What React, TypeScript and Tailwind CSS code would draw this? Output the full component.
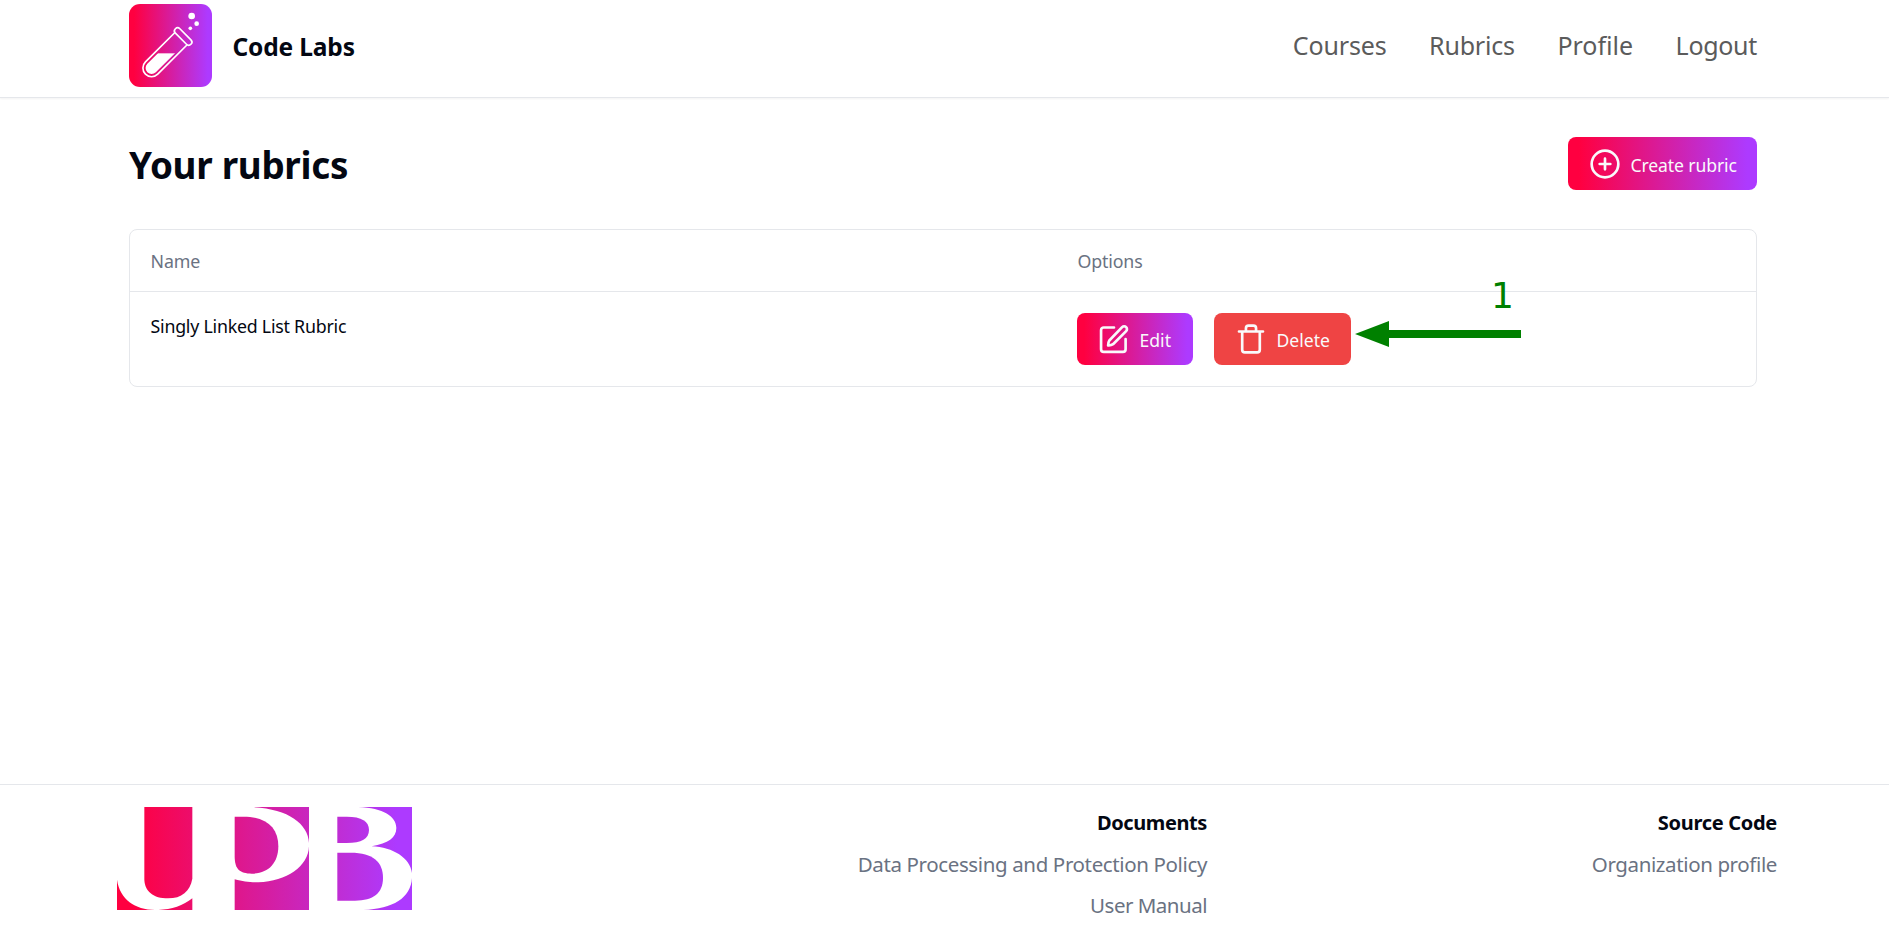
import type { ReactNode } from "react";

const BRAND = "bg-[linear-gradient(90deg,#ff0040_6%,#ad3aff_95%)]";

function FlaskLogo() {
  return (
    <div className={`size-[83px] overflow-hidden rounded-[11px] ${BRAND}`}>
      <svg viewBox="57 12 249 249" className="size-full" fill="none">
        <defs>
          <clipPath id="tube">
            <path
              transform="translate(219.5 109.5) rotate(45)"
              d="M-18 8V134A18 18 0 0 0 18 134V8Z"
            />
          </clipPath>
        </defs>
        <g transform="translate(219.5 109.5) rotate(45)" stroke="#fff" strokeWidth="5">
          <path d="M-26 9V134A26 26 0 0 0 26 134V9" />
          <rect x="-33" y="-9.5" width="66" height="19" rx="9.5" />
        </g>
        <rect x="57" y="160" width="249" height="101" fill="#fff" clipPath="url(#tube)" />
        <circle cx="245" cy="48" r="10" fill="#fff" />
        <circle cx="260" cy="71" r="7" fill="#fff" />
        <circle cx="241" cy="85" r="5.5" fill="#fff" />
      </svg>
    </div>
  );
}

function UniversityLogo() {
  return (
    <svg viewBox="51 97 885 309" className="h-[103px] w-[295px]">
      <defs>
        <linearGradient id="upb" gradientUnits="userSpaceOnUse" x1="51" y1="0" x2="936" y2="0">
          <stop offset="0.05" stopColor="#ff0040" />
          <stop offset="0.95" stopColor="#ad3aff" />
        </linearGradient>
      </defs>
      <g fill="url(#upb)">
        <path d="M133 97H277V312C270 350 245 371 204 371C160 371 133 350 133 312Z" />
        <path d="M51 315C60 375 105 404 165 406H51Z" />
        <path d="M277 371V406H175C215 405 250 393 277 371Z" />
        <path d="M450 97H627V205C625 145 560 100 450 97Z" />
        <path d="M404 126H430C500 126 535 160 535 215C535 265 505 297 455 297C420 297 404 285 404 245Z" />
        <path d="M404 314C430 321 445 323 475 323C560 320 625 275 627 215V406H404Z" />
        <path d="M712 126H740C785 126 807 140 807 166C807 192 785 205 740 205H712Z" />
        <path d="M712 234H752C820 234 849 262 849 310C849 355 820 378 765 378H712Z" />
        <path d="M775 97H936V295C930 250 880 218 815 215C865 205 889 190 889 160C889 125 850 100 775 97Z" />
        <path d="M936 310V406H790C880 402 932 370 936 310Z" />
      </g>
    </svg>
  );
}

function Icon({ children }: { children: ReactNode }) {
  return (
    <svg
      viewBox="0 0 24 24"
      className="size-8 shrink-0"
      fill="none"
      stroke="#f9fafb"
      strokeWidth="2"
      strokeLinecap="round"
      strokeLinejoin="round"
    >
      {children}
    </svg>
  );
}

const BUTTON =
  "flex items-center gap-[10px] rounded-[8px] pl-[20.5px] text-[17.6px] leading-[26px] text-gray-50";

export default function App() {
  return (
    <div className="relative flex h-[938px] w-[1889px] flex-col overflow-hidden bg-white font-['Noto_Sans',sans-serif] text-gray-950">
      <header className="h-[98px] border-b border-gray-200 pt-1 pr-[132px] pl-[129px] shadow-xs">
        <div className="flex h-[83px] items-center">
          <FlaskLogo />
          <span className="ml-[20.5px] pt-[3px] text-[24.5px] font-bold tracking-[-0.15px]">
            Code Labs
          </span>
          <nav className="ml-auto flex gap-[42.5px] pt-px text-[25px] text-[#5b5b5b]">
            <a className="tracking-[-0.15px]">Courses</a>
            <a className="tracking-[-0.18px]">Rubrics</a>
            <a>Profile</a>
            <a className="tracking-[-0.3px]">Logout</a>
          </nav>
        </div>
      </header>

      <main className="flex-1 pt-[39px] pr-[132px] pl-[129px]">
        <div className="flex h-[53px] items-center justify-between">
          <h1 className="pt-[3px] text-[36.8px] leading-[50px] font-bold tracking-[-0.3px]">
            Your rubrics
          </h1>
          <button className={`h-[53px] w-[189px] ${BUTTON} ${BRAND}`}>
            <Icon>
              <circle cx="12" cy="12" r="10" />
              <path d="M8 12h8M12 8v8" />
            </Icon>
            <span className="pt-[2px] tracking-[-0.12px] whitespace-nowrap">Create rubric</span>
          </button>
        </div>

        <section className="mt-[39px] rounded-[8px] border border-gray-200 text-[17.8px]">
          <div className="grid h-[62px] grid-cols-[927px_1fr] items-center border-b border-gray-200 pt-[2px] text-gray-500">
            <span className="pl-[20.5px] tracking-[-0.1px]">Name</span>
            <span className="pl-[20.5px] tracking-[-0.15px]">Options</span>
          </div>
          <div className="grid h-[94px] grid-cols-[927px_1fr] pt-[21px]">
            <span className="pl-[20.5px] leading-[27px] tracking-[-0.23px]">
              Singly Linked List Rubric
            </span>
            <div className="flex gap-[21px] pl-[20px]">
              <button className={`h-[52px] w-[116px] ${BUTTON} ${BRAND}`}>
                <Icon>
                  <path d="M12 3.4H4.3a2 2 0 0 0-2 2v14.2a2 2 0 0 0 2 2h14.4a2 2 0 0 0 2-2V12" />
                  <path d="M18.1 3.1a2.1 2.1 0 0 1 3 3L11.3 15.9c-1 .7-2.3 1-3.7.9 0-1.5.2-2.7.9-3.7Z" />
                </Icon>
                <span className="pt-px">Edit</span>
              </button>
              <button className={`h-[52px] w-[137px] bg-[#ef4444] ${BUTTON}`}>
                <Icon>
                  <path d="M3 6.4h18M18.600 6.4V20a2 2 0 0 1-2 2H7.4a2 2 0 0 1-2-2V6.4M8.2 6.4V4a2 2 0 0 1 2-2h3.6a2 2 0 0 1 2 2v2.4" />
                </Icon>
                <span className="pt-px">Delete</span>
              </button>
            </div>
          </div>
        </section>
      </main>

      <footer className="flex h-[154px] border-t border-gray-200 pr-[112px] pl-[117px] text-[20.5px]">
        <div className="pt-[22px]">
          <UniversityLogo />
        </div>
        <div className="ml-auto flex pt-[17px] text-right">
          <div className="w-[400px]">
            <h2 className="text-[20px] leading-[42px] font-bold tracking-[-0.4px]">Documents</h2>
            <p className="leading-[41px] tracking-[-0.37px] text-gray-500">
              Data Processing and Protection Policy
            </p>
            <p className="leading-[41px] tracking-[-0.5px] text-gray-500">User Manual</p>
          </div>
          <div className="w-[570px]">
            <h2 className="text-[20px] leading-[42px] font-bold tracking-[-0.3px]">Source Code</h2>
            <p className="leading-[41px] tracking-[-0.38px] text-gray-500">Organization profile</p>
          </div>
        </div>
      </footer>

      <span className="absolute top-[273px] left-[1491px] font-['DejaVu_Sans',sans-serif] text-[36px] leading-[46px] text-[#008000]">
        1
      </span>
      <svg viewBox="0 0 166 26" className="absolute top-[321px] left-[1355px] h-[26px] w-[166px]">
        <path d="M0 13L34 0V9H166V17H34V26Z" fill="#008000" />
      </svg>
    </div>
  );
}
